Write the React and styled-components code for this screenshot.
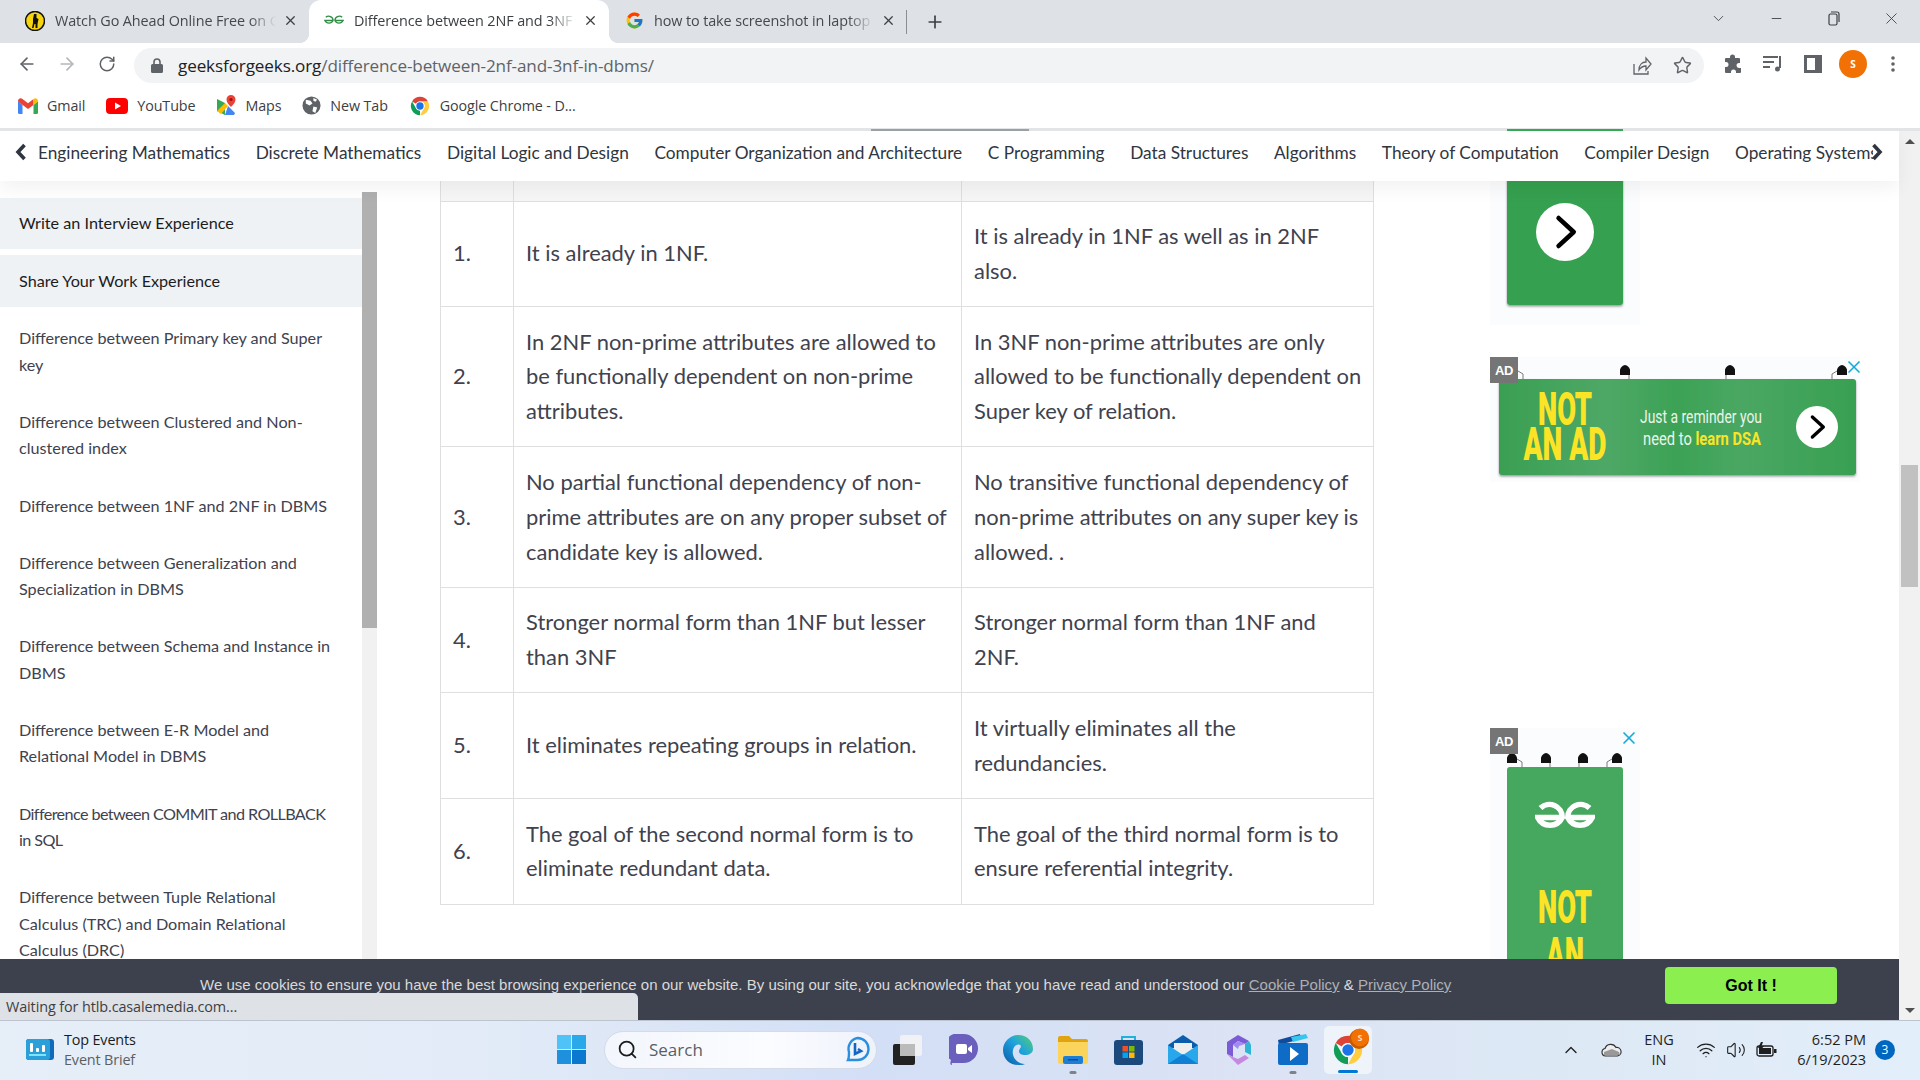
import React from 'react';
import styled, { createGlobalStyle } from 'styled-components';
import { FcGoogle } from 'react-icons/fc';
import { ArrowLeft, ArrowRight, RotateCw, Star, X, Plus, ChevronDown, Minus, Wifi, Volume2, ChevronUp, Search as SearchGlyph } from 'lucide-react';

const SITE = '"Lato", "Noto Sans", sans-serif';
const UI = '"Open Sans", "Noto Sans", sans-serif';

const Global = createGlobalStyle`
  html, body { margin: 0; padding: 0; background: #fff; }
  * { box-sizing: border-box; }
  body { font-family: ${SITE}; overflow: hidden; }
`;

const Screen = styled.div`width:1920px;height:1080px;display:flex;flex-direction:column;overflow:hidden;background:#fff;`;

/* ---------- browser chrome ---------- */
const TabStrip = styled.div`height:43px;flex:none;background:#dee1e6;display:flex;align-items:stretch;`;
const Tab = styled.div`
  width:${p=>p.$w}px;padding:0 0 2px ${p=>p.$pad}px;display:flex;align-items:center;position:relative;
  font:14.4px ${UI};letter-spacing:-.1px;color:#45494e;flex:none;
  ${p=>p.$active?`background:#fff;border-radius:12px 12px 0 0;color:#3c4043;
    &::before,&::after{content:"";position:absolute;bottom:0;width:10px;height:10px;}
    &::before{left:-10px;background:radial-gradient(circle at 0 0,transparent 10px,#fff 10.5px);}
    &::after{right:-10px;background:radial-gradient(circle at 100% 0,transparent 10px,#fff 10.5px);}`:''}
`;
const Fav = styled.span`width:20px;height:20px;flex:none;margin-right:10px;display:flex;align-items:center;justify-content:center;`;
const TabLabel = styled.span`flex:1;min-width:0;white-space:nowrap;overflow:hidden;-webkit-mask-image:linear-gradient(90deg,#000 88%,transparent);mask-image:linear-gradient(90deg,#000 88%,transparent);`;
const TabClose = styled.span`width:16px;height:16px;margin:0 11px 0 6px;display:flex;align-items:center;justify-content:center;color:#3c4043;flex:none;`;
const TabDivider = styled.span`width:1px;height:24px;background:#8a8d91;align-self:center;margin-left:-1px;`;
const NewTab = styled.span`width:56px;display:flex;align-items:center;justify-content:center;color:#3c4043;`;
const WindowControls = styled.div`margin-left:auto;display:flex;padding-bottom:6px;`;
const WinBtn = styled.span`width:57.5px;display:flex;align-items:center;justify-content:center;color:#3c4043;`;

const Toolbar = styled.div`height:42px;flex:none;background:#fff;display:flex;align-items:center;padding:0 8px 0 7px;`;
const ToolBtn = styled.span`width:${p=>p.$w||40}px;height:36px;flex:none;display:flex;align-items:center;justify-content:center;color:${p=>p.$dim?'#b4b7bb':'#5f6368'};`;
const Omnibox = styled.div`flex:1;height:35px;margin:3px 9px 0 7px;background:#f1f3f4;border-radius:18px;display:flex;align-items:center;padding:0 2px 0 17px;`;
const Url = styled.div`flex:1;font:17.1px ${UI};letter-spacing:-.12px;color:#5f6368;margin-left:15px;padding-bottom:1px;white-space:nowrap;b{font-weight:400;color:#202124;}`;
const Avatar = styled.span`width:28px;height:28px;border-radius:50%;background:#f17105;color:#fff;font:700 10px ${UI};display:flex;align-items:center;justify-content:center;`;

const Bookmarks = styled.div`height:43px;flex:none;background:#fff;display:flex;align-items:center;gap:21px;padding:0 0 2px 18px;`;
const Bookmark = styled.span`display:flex;align-items:center;gap:9px;font:14.3px ${UI};letter-spacing:-.1px;color:#3c4043;white-space:nowrap;`;

const PeekStrip = styled.div`height:3px;flex:none;background:#e3e4e6;display:flex;padding-top:1px;`;
const PeekBar = styled.span`height:2px;width:${p=>p.$w}px;margin-left:${p=>p.$ml}px;background:${p=>p.$c};`;

/* ---------- page ---------- */
const PageArea = styled.div`flex:1;min-height:0;display:flex;position:relative;overflow:hidden;`;
const Viewport = styled.div`flex:1;min-width:0;display:flex;flex-direction:column;position:relative;`;
const TopNav = styled.nav`height:50px;flex:none;background:#fff;display:flex;align-items:center;padding-bottom:8px;position:relative;z-index:2;box-shadow:0 8px 18px rgba(0,0,0,.05);`;
const NavBack = styled.span`flex:none;width:38px;padding-left:4px;display:flex;justify-content:center;color:#2f3640;`;
const NavForward = styled.span`flex:none;width:26px;display:flex;color:#2f3640;transform:translateX(-2px);`;
const NavList = styled.div`flex:1;min-width:0;overflow:hidden;display:flex;gap:25.6px;white-space:nowrap;font:17.28px ${SITE};color:#2f3640;height:28px;align-items:center;`;

const Body = styled.div`flex:1;min-height:0;display:flex;overflow:hidden;`;
const Sidebar = styled.aside`width:377px;flex:none;display:flex;margin-top:11px;`;
const SideList = styled.div`width:362px;flex:none;padding-top:6px;font:16.2px/26.4px ${SITE};color:#40424e;`;
const SideFeature = styled.div`height:${p=>p.$h}px;background:#eff2f5;color:#1c1c1c;padding-left:19px;display:flex;align-items:center;margin-bottom:6px;`;
const SideItem = styled.div`padding:15.4px 0 15.4px 19px;white-space:pre;letter-spacing:${p=>p.$tight?'-.6px':'0'};`;
const SideItems = styled.div`margin-top:-3px;`;
const SideTrack = styled.div`width:15px;flex:none;background:#f1f1f1;`;
const SideThumb = styled.div`height:436px;background:#b0b0b0;`;

const MainCol = styled.main`width:933px;flex:none;margin-left:63px;`;
const DataTable = styled.table`width:933px;border-collapse:collapse;table-layout:fixed;font:21.9px/34.8px ${SITE};color:#40424e;`;
const HeadCell = styled.td`height:20px;padding:0;background:#f6f6f6;border:1px solid #dfdfdf;border-top:0;`;
const Cell = styled.td`padding:17.5px 9px 17.5px 12px;border:1px solid #dfdfdf;vertical-align:middle;`;

const AdCol = styled.div`width:370px;flex:none;margin-left:117px;display:flex;flex-direction:column;`;
const AdFrame = styled.div`position:relative;width:${p=>p.$w}px;height:${p=>p.$h}px;margin-top:${p=>p.$mt||0}px;background:#fbfcfe;flex:none;svg{display:block;}`;
const AdBadge = styled.span`position:absolute;left:0;top:0;width:28px;height:26px;background:#757575;color:#fff;font:700 13px "Liberation Sans",sans-serif;letter-spacing:-.5px;display:flex;align-items:center;justify-content:center;z-index:1;`;
const AdClose = styled.span`position:absolute;top:0;right:${p=>p.$r}px;color:#12acd6;display:flex;z-index:1;`;

const PageScroll = styled.div`width:21px;flex:none;background:#f1f1f1;display:flex;flex-direction:column;align-items:center;position:relative;`;
const ScrollThumb = styled.div`width:17px;height:122px;background:#c1c1c1;margin-top:321px;`;
const ScrollArrow = styled.span`width:0;height:0;border-left:5px solid transparent;border-right:5px solid transparent;${p=>p.$up?'border-bottom:5px solid #505050;margin-top:8px;':'border-top:5px solid #505050;position:absolute;bottom:7px;'}`;

const CookieBar = styled.div`position:absolute;left:0;right:0;bottom:0;height:61px;background:#3d414d;z-index:3;display:flex;align-items:flex-start;padding:8px 0 0 200px;`;
const CookieText = styled.div`width:1465px;height:35px;display:flex;align-items:center;font:15px "Liberation Sans",Arial,sans-serif;color:#d9d9d9;white-space:pre;a{color:#aeb0b5;text-decoration:underline;}`;
const GotIt = styled.button`width:172px;height:37px;border:0;border-radius:4px;background:#8bef4f;color:#000;font:700 16px "Liberation Sans",Arial,sans-serif;`;
const StatusBubble = styled.div`position:absolute;left:0;bottom:0;width:638px;height:27px;background:#dee1e6;border-top-right-radius:5px;z-index:4;font:14.4px ${UI};letter-spacing:-.1px;color:#3c4043;padding-left:6px;display:flex;align-items:center;`;

/* ---------- taskbar ---------- */
const Taskbar = styled.footer`height:60px;flex:none;display:flex;align-items:center;position:relative;border-top:1px solid #bcc4d0;padding-bottom:2px;
  background:linear-gradient(90deg,#e6eef8 0%,#e2ebf7 25%,#d3dff6 45%,#dbe3f4 65%,#dde8f5 80%,#e2eef9 100%);`;
const Widget = styled.div`flex:none;width:557px;padding-left:26px;display:flex;align-items:center;gap:10px;`;
const WidgetText = styled.div`font:14.4px/20px ${UI};letter-spacing:-.15px;color:#1b1b1b;span{display:block;color:#5a5f66;}`;
const StartBtn = styled.span`flex:none;width:29px;height:29px;margin-right:18px;display:flex;`;
const SearchBox = styled.div`flex:none;width:273px;height:38px;border-radius:19px;background:linear-gradient(90deg,#f3f6fc,#fbfcff 60%,#eef2fb);border:1px solid #d5dbe7;display:flex;align-items:center;padding:0 6px 0 12px;font:17px ${UI};color:#5a5f66;gap:11px;margin-right:3.5px;`;
const SearchLabel = styled.span`flex:1;`;
const Slot = styled.span`flex:none;width:55px;height:48px;display:flex;align-items:center;justify-content:center;position:relative;
  ${p=>p.$open?`&::after{content:"";position:absolute;bottom:${p.$active?'1px':'0'};left:50%;transform:translateX(-50%);height:3px;border-radius:2px;width:${p.$active?'20px':'7px'};background:${p.$active?'#0078d4':'#7e8288'};}`:''}
  ${p=>p.$active?'background:rgba(255,255,255,.55);border-radius:5px;':''}
`;
const ActiveSlot = styled.div`flex:none;width:55px;display:flex;justify-content:center;`;
const ActiveInner = styled(Slot)`width:48px;`;
const TrayBadgeDot = styled.span`position:absolute;right:3px;top:2px;display:flex;`;
const Tray = styled.div`margin-left:auto;display:flex;align-items:center;padding-right:25px;color:#1f1f1f;`;
const TraySlot = styled.span`width:${p=>p.$w}px;display:flex;justify-content:center;align-items:center;flex:none;`;
const Lang = styled.span`width:56px;text-align:center;font:14.5px/20px ${UI};color:#1f1f1f;`;
const Clock = styled.span`width:85px;text-align:right;font:14.5px/20px ${UI};color:#1f1f1f;white-space:nowrap;`;
const Badge = styled.span`width:20px;height:20px;border-radius:50%;margin-left:9px;background:#0067c0;color:#fff;font:12px ${UI};display:flex;align-items:center;justify-content:center;`;

/* ---------- icons ---------- */
const GfgLogo = ({ size = 20, color = '#2f8d46', sw = 1.5 }) => (
  <svg width={size} height={size * .55} viewBox="0 0 44 24" fill="none" stroke={color} strokeWidth={sw * 2}>
    <path d="M4 5A9.500 9.500 0 0 1 20 12A10 10 0 0 1 2 12H20" /><path d="M40 5A9.500 9.500 0 0 0 24 12A10 10 0 0 0 42 12H24" />
  </svg>
);
const ChromeIcon = ({ size = 22 }) => (
  <svg width={size} height={size} viewBox="0 0 24 24">
    <path fill="#db4437" d="M12 2A10 10 0 0 1 20.66 7H12A5 5 0 0 0 7.67 9.500L3.34 7A10 10 0 0 1 12 2z" />
    <path fill="#0f9d58" d="M3.34 7L7.67 14.500A5 5 0 0 0 12 17L12 22A10 10 0 0 1 3.34 7z" />
    <path fill="#ffcd40" d="M20.66 7H12A5 5 0 0 1 16.33 14.500L12 22A10 10 0 0 0 20.66 7z" />
    <circle cx="12" cy="12" r="5" fill="#fff" /><circle cx="12" cy="12" r="4" fill="#1a73e8" />
  </svg>
);
const Gmail = () => (
  <svg width="20" height="16" viewBox="0 0 20 16">
    <path fill="#4285f4" d="M0 3v11.500A1.500 1.500 0 0 0 1.500 16H4.500V7z" /><path fill="#34a853" d="M20 3v11.500A1.500 1.500 0 0 1 18.500 16H15.500V7z" />
    <path fill="#ea4335" d="M0 3.500C0 .8 2.600-.500 4.500 1L10 5.200 15.500 1V7L10 11 0 3.500z" /><path fill="#fbbc04" d="M15.500 1C17.400-.500 20 .8 20 3.500L15.500 7z" />
  </svg>
);
const YouTube = () => (
  <svg width="22" height="16" viewBox="0 0 22 16"><rect width="22" height="16" rx="4" fill="#f00" /><path fill="#fff" d="M9 4.500l6 3.500-6 3.500z" /></svg>
);
const Maps = () => (
  <svg width="20" height="22" viewBox="0 0 20 22">
    <path fill="#34a853" d="M1 4l8 4v12L1 16z" /><path fill="#fbbc04" d="M1 16l8-8 3 3-7 8z" /><path fill="#4285f4" d="M9 20l3-9 7 7-1 2z" /><path fill="#ea4335" d="M15 0a4.500 4.500 0 0 0-4.500 4.500C10.500 8 15 12 15 12s4.500-4 4.500-7.500A4.500 4.500 0 0 0 15 0z" /><circle cx="15" cy="4.500" r="1.600" fill="#a50e0e" />
  </svg>
);
const Globe = () => (
  <svg width="19" height="19" viewBox="0 0 20 20"><circle cx="10" cy="10" r="9.500" fill="#5f6368" /><path fill="#fff" d="M4 4l5 1 2 3-3 2-4-2zM12 11l4 1-2 6-3-2zM12 2l4 2-2 2-2-1z" /></svg>
);
const Lock = () => (
  <svg width="12" height="15" viewBox="0 0 12 15"><path fill="#5f6368" d="M1.500 6h9A1.500 1.500 0 0 1 12 7.500v6A1.500 1.500 0 0 1 10.500 15h-9A1.500 1.500 0 0 1 0 13.500v-6A1.500 1.500 0 0 1 1.500 6z" /><path fill="none" stroke="#5f6368" strokeWidth="1.600" d="M3 6.500V4a3 3 0 0 1 6 0v2.500" /></svg>
);
const Share = () => (
  <svg width="20" height="20" viewBox="0 0 20 20" fill="none" stroke="#5f6368" strokeWidth="1.300"><path d="M2 8v10h14v-3" /><path d="M7 14c0-5 3-8 7-8V2l5 6-5 6v-4c-3 0-5 1-7 4z" /></svg>
);
const Puzzle = () => (
  <svg width="18" height="20" viewBox="0 0 18 20"><path fill="#5f6368" d="M6 3a2.500 2.500 0 0 1 5 0v1h4a1 1 0 0 1 1 1v4h-1a2.500 2.500 0 0 0 0 5h2v4a1 1 0 0 1-1 1h-4v-1a2.500 2.500 0 0 0-5 0v1H2a1 1 0 0 1-1-1v-5h1a2.500 2.500 0 0 0 0-5H1V5a1 1 0 0 1 1-1h4z" /></svg>
);
const MediaQ = () => (
  <svg width="20" height="18" viewBox="0 0 20 18" fill="none" stroke="#5f6368" strokeWidth="2"><path d="M0 2h15M0 7h11M0 12h7" /><path d="M17 1v12" /><circle cx="14.500" cy="14" r="2.500" fill="#5f6368" stroke="none" /></svg>
);
const SidePanel = () => (
  <svg width="18" height="18" viewBox="0 0 18 18"><path fill="#5f6368" fillRule="evenodd" d="M0 0h18v18H0zM3 3v12h8V3z" /></svg>
);
const Dots = () => (
  <svg width="4" height="16" viewBox="0 0 4 16" fill="#5f6368"><circle cx="2" cy="2" r="1.800" /><circle cx="2" cy="8" r="1.800" /><circle cx="2" cy="14" r="1.800" /></svg>
);
const Restore = () => (
  <svg width="12" height="15" viewBox="0 0 12 15" fill="none" stroke="#3c4043" strokeWidth="1.200"><rect x="1" y="3" width="8" height="11" rx="1.500" /><path d="M3 1h6a2 2 0 0 1 2 2v8" /></svg>
);
const GoAhead = () => (
  <svg width="20" height="20" viewBox="0 0 20 20"><circle cx="10" cy="10" r="9.500" fill="#f6d40e" stroke="#111" strokeWidth="1.500" /><path fill="#111" d="M9 3h2.500v4l2 1-1 5v4h-2v-4h-1l-1 4H7l1-5V8z" /></svg>
);
const NavChevron = ({ right }) => (
  <svg width="12" height="18" viewBox="0 0 12 18" fill="none" stroke="currentColor" strokeWidth="3.600" strokeLinejoin="miter">
    <path d={right ? 'M2.500 2l6.500 7-6.500 7' : 'M9.500 2L3 9l6.500 7'} />
  </svg>
);

/* A hanging lamp over an ad: x is the lamp, stem is where its wire meets the board, top is the board's y. */
const Lamp = ({ x, stem, top }) => (
  <g>
    <path fill="none" stroke="#7a7a7a" strokeWidth="1" d={`M${stem} ${top}v-5L${x} ${top - 11}`} />
    <path fill="#111" d={`M${x - 5} ${top - 4}v-5c0-2 3-5 5-5s5 3 5 5v5z`} />
  </g>
);
const GoCircle = ({ cx, cy, r }) => (
  <g><circle cx={cx} cy={cy} r={r} fill="#fff" /><path fill="none" stroke="#000" strokeWidth={r * .16} strokeLinecap="round" strokeLinejoin="round" d={`M${cx - r * .22} ${cy - r * .48}L${cx + r * .3} ${cy}L${cx - r * .22} ${cy + r * .48}`} /></g>
);
const Condensed = ({ x, y, w, size, fill = '#fbe426', weight = 900, anchor = 'middle', children }) => (
  <text x={x} y={y} fontFamily='"Roboto","Liberation Sans",sans-serif' fontWeight={weight} fontSize={size} fill={fill} textAnchor={anchor} textLength={w} lengthAdjust="spacingAndGlyphs">{children}</text>
);
const AdDefs = () => (
  <defs>
    <linearGradient id="adg" x1="0" x2="1" y1="0" y2="0">
      <stop offset="0" stopColor="#3a9f52" /><stop offset=".3" stopColor="#4ea866" /><stop offset=".5" stopColor="#3ca255" /><stop offset=".68" stopColor="#4aa763" /><stop offset="1" stopColor="#38a052" />
    </linearGradient>
    <filter id="ads" x="-5%" y="-5%" width="110%" height="110%"><feDropShadow dx="0" dy="1.500" stdDeviation="1.200" floodOpacity=".4" /></filter>
  </defs>
);

const navLinks = ['Engineering Mathematics', 'Discrete Mathematics', 'Digital Logic and Design', 'Computer Organization and Architecture', 'C Programming', 'Data Structures', 'Algorithms', 'Theory of Computation', 'Compiler Design', 'Operating Systems'];
const sideLinks = [
  'Difference between Primary key and Super\nkey',
  'Difference between Clustered and Non-\nclustered index',
  'Difference between 1NF and 2NF in DBMS',
  'Difference between Generalization and\nSpecialization in DBMS',
  'Difference between Schema and Instance in\nDBMS',
  'Difference between E-R Model and\nRelational Model in DBMS',
  'Difference between COMMIT and ROLLBACK\nin SQL',
  'Difference between Tuple Relational\nCalculus (TRC) and Domain Relational\nCalculus (DRC)',
];
const rows = [
  ['1.', 'It is already in 1NF.', 'It is already in 1NF as well as in 2NF also.'],
  ['2.', 'In 2NF non-prime attributes are allowed to be functionally dependent on non-prime attributes.', 'In 3NF non-prime attributes are only allowed to be functionally dependent on Super key of relation.'],
  ['3.', 'No partial functional dependency of non-prime attributes are on any proper subset of candidate key is allowed.', 'No transitive functional dependency of non-prime attributes on any super key is allowed. .'],
  ['4.', 'Stronger normal form than 1NF but lesser than 3NF', 'Stronger normal form than 1NF and 2NF.'],
  ['5.', 'It eliminates repeating groups in relation.', 'It virtually eliminates all the redundancies.'],
  ['6.', 'The goal of the second normal form is to eliminate redundant data.', 'The goal of the third normal form is to ensure referential integrity.'],
];

const TI = {
  taskview: (<svg width="30" height="30" viewBox="0 0 30 30"><rect x="0" y="9" width="22" height="21" rx="2" fill="#222" /><rect x="7" y="0" width="22" height="21" rx="2" fill="#f5f5f5" fillOpacity=".85" /><rect x="7" y="9" width="15" height="12" fill="#bbb" /></svg>),
  chat: (<svg width="29" height="31" viewBox="0 0 29 31"><path fill="#6a5fbd" d="M14.500 0a14.500 14.500 0 0 1 0 29H3a2 2 0 0 0 0 2c-2 0-2-2-1-5A14.500 14.500 0 0 1 14.500 0z" /><rect x="7" y="10" width="11" height="10" rx="2" fill="#fff" /><path fill="#fff" d="M19 14l4-3v8l-4-3z" /></svg>),
  edge: (<svg width="30" height="30" viewBox="0 0 30 30"><defs><linearGradient id="eg" x1="0" x2="1" y1="1" y2="0"><stop offset="0" stopColor="#0c59a4" /><stop offset=".55" stopColor="#1ea2df" /><stop offset="1" stopColor="#54d073" /></linearGradient></defs><path fill="url(#eg)" d="M15 0c9 0 15 6 15 14 0 4-4 6-8 6-3 0-6-1-6-4 0-2 2-3 2-5-1-2-4-2-6 0-3 3-3 9 0 13 2 3 6 5 10 5-1 1-4 1-7 1C7 30 0 24 0 15 0 7 7 0 15 0z" /></svg>),
  folder: (<svg width="30" height="28" viewBox="0 0 30 28"><path fill="#e0a410" d="M0 2a2 2 0 0 1 2-2h9l3 3h14a2 2 0 0 1 2 2v3H0z" /><path fill="#fbd45b" d="M0 6h30v20a2 2 0 0 1-2 2H2a2 2 0 0 1-2-2z" /><rect x="5" y="20" width="20" height="8" rx="2" fill="#1c7ed6" /><rect x="10" y="23" width="10" height="1.500" fill="#0b4f99" /></svg>),
  store: (<svg width="29" height="30" viewBox="0 0 29 30"><path fill="none" stroke="#20b2d8" strokeWidth="2" d="M8 7V2h13v5" /><rect y="5" width="29" height="25" rx="3" fill="#1c4a7d" /><rect x="8.500" y="11" width="5.500" height="5.500" fill="#f25022" /><rect x="15" y="11" width="5.500" height="5.500" fill="#7fba00" /><rect x="8.500" y="17.500" width="5.500" height="5.500" fill="#00a4ef" /><rect x="15" y="17.500" width="5.500" height="5.500" fill="#ffb900" /></svg>),
  mail: (<svg width="30" height="29" viewBox="0 0 30 29"><path fill="#0b5cad" d="M0 10L15 0l15 10v3H0z" /><path fill="#eee" d="M6 8h18v8l-9 6-9-6z" /><path fill="#28a8ea" d="M0 10l15 10 15-10v19H0z" /><path fill="#0f80d6" d="M0 29l15-10 15 10z" /></svg>),
  m365: (<svg width="26" height="30" viewBox="0 0 26 30"><path fill="#7b5bd6" d="M13 0l11 6-4 3-7-3-5 4v12l-6-3V7z" /><path fill="#2fb4d6" d="M24 6l2 4v10l-6-3V9z" /><path fill="#c58ae0" d="M2 19l6 3 5 2 7-4 4 3-11 7z" /><path fill="#a48af0" d="M8 10l5-4 7 3-6 2-1 3z" /></svg>),
  clip: (<svg width="30" height="31" viewBox="0 0 30 31"><path fill="#0f4c9c" d="M0 6l22-6 1 5L1 11z" /><path fill="#37c6ee" d="M13 3l15-3 2 4-15 4z" /><rect y="9" width="30" height="22" rx="2" fill="#0e6cc7" /><path fill="#fff" d="M12 13l9 7-9 7z" /></svg>),
};

export default function App() {
  return (
    <Screen>
      <Global />
      <TabStrip>
        <Tab $w={309} $pad={25}><Fav><GoAhead /></Fav><TabLabel>Watch Go Ahead Online Free on Gomovies</TabLabel><TabClose><X size={15} strokeWidth={2} /></TabClose></Tab>
        <Tab $w={300} $pad={15} $active><Fav><GfgLogo size={20} /></Fav><TabLabel>Difference between 2NF and 3NF in DBMS</TabLabel><TabClose><X size={15} strokeWidth={2} /></TabClose></Tab>
        <Tab $w={298} $pad={15}><Fav><FcGoogle size={19} /></Fav><TabLabel>how to take screenshot in laptop - Google</TabLabel><TabClose><X size={15} strokeWidth={2} /></TabClose></Tab>
        <TabDivider />
        <NewTab><Plus size={20} strokeWidth={2} /></NewTab>
        <WindowControls>
          <WinBtn><ChevronDown size={17} strokeWidth={1.2} /></WinBtn>
          <WinBtn><Minus size={15} strokeWidth={1.4} /></WinBtn>
          <WinBtn><Restore /></WinBtn>
          <WinBtn><X size={19} strokeWidth={1.1} /></WinBtn>
        </WindowControls>
      </TabStrip>
      <Toolbar>
        <ToolBtn><ArrowLeft size={20} strokeWidth={2} /></ToolBtn>
        <ToolBtn $dim><ArrowRight size={20} strokeWidth={2} /></ToolBtn>
        <ToolBtn><RotateCw size={18} strokeWidth={2} /></ToolBtn>
        <Omnibox>
          <Lock />
          <Url><b>geeksforgeeks.org</b>/difference-between-2nf-and-3nf-in-dbms/</Url>
          <ToolBtn><Share /></ToolBtn>
          <ToolBtn><Star size={19} strokeWidth={1.8} /></ToolBtn>
        </Omnibox>
        <ToolBtn><Puzzle /></ToolBtn>
        <ToolBtn><MediaQ /></ToolBtn>
        <ToolBtn><SidePanel /></ToolBtn>
        <ToolBtn><Avatar>S</Avatar></ToolBtn>
        <ToolBtn $w={39}><Dots /></ToolBtn>
      </Toolbar>
      <Bookmarks>
        <Bookmark><Gmail />Gmail</Bookmark>
        <Bookmark><YouTube />YouTube</Bookmark>
        <Bookmark><Maps />Maps</Bookmark>
        <Bookmark><Globe />New Tab</Bookmark>
        <Bookmark><ChromeIcon />Google Chrome - D...</Bookmark>
      </Bookmarks>
      <PeekStrip><PeekBar $ml={871} $w={158} $c="#9aa0a6" /><PeekBar $ml={478} $w={116} $c="#34a853" /></PeekStrip>
      <PageArea>
        <Viewport>
          <TopNav>
            <NavBack><NavChevron /></NavBack>
            <NavList>{navLinks.map(n => <span key={n}>{n}</span>)}</NavList>
            <NavForward><NavChevron right /></NavForward>
          </TopNav>
          <Body>
            <Sidebar>
              <SideList>
                <SideFeature $h={51}>Write an Interview Experience</SideFeature>
                <SideFeature $h={52}>Share Your Work Experience</SideFeature>
                <SideItems>{sideLinks.map(s => <SideItem key={s} $tight={s.includes('ROLLBACK')}>{s}</SideItem>)}</SideItems>
              </SideList>
              <SideTrack><SideThumb /></SideTrack>
            </Sidebar>
            <MainCol>
              <DataTable>
                <colgroup><col width="73" /><col width="448" /><col width="412" /></colgroup>
                <tbody>
                  <tr><HeadCell /><HeadCell /><HeadCell /></tr>
                  {rows.map(r => <tr key={r[0]}>{r.map((c, i) => <Cell key={i}>{c}</Cell>)}</tr>)}
                </tbody>
              </DataTable>
            </MainCol>
            <AdCol>
              <AdFrame $w={150} $h={144}>
                <svg width="150" height="144"><AdDefs /><rect x="17" y="-10" width="116" height="134" rx="3" fill="#36a050" filter="url(#ads)" /><GoCircle cx={75} cy={51} r={29} /></svg>
              </AdFrame>
              <AdFrame $w={370} $h={125} $mt={32}>
                <AdBadge>AD</AdBadge>
                <AdClose $r={-4}><X size={20} strokeWidth={2} /></AdClose>
                <svg width="370" height="125">
                  <Lamp x={23} stem={33} top={22} /><Lamp x={135} stem={139} top={22} /><Lamp x={240} stem={236} top={22} /><Lamp x={352} stem={342} top={22} />
                  <rect x="9" y="22" width="357" height="96" rx="3" fill="url(#adg)" filter="url(#ads)" />
                  <Condensed x={75} y={68} w={54} size={46}>NOT</Condensed>
                  <Condensed x={75} y={103} w={83} size={46}>AN AD</Condensed>
                  <Condensed x={211} y={66} w={122} size={19} fill="#eaf5ec" weight={400}>Just a reminder you</Condensed>
                  <text x="153" y="88" fontFamily='"Roboto",sans-serif' fontSize="19" fill="#eaf5ec" textLength="118" lengthAdjust="spacingAndGlyphs">need to <tspan fill="#fbe426" fontWeight="700">learn DSA</tspan></text>
                  <GoCircle cx={327} cy={70} r={21} />
                </svg>
              </AdFrame>
              <AdFrame $w={150} $h={240} $mt={246}>
                <AdBadge>AD</AdBadge>
                <AdClose $r={1}><X size={20} strokeWidth={2} /></AdClose>
                <svg width="150" height="240">
                  <Lamp x={22} stem={32} top={39} /><Lamp x={56} stem={60} top={39} /><Lamp x={93} stem={89} top={39} /><Lamp x={127} stem={117} top={39} />
                  <rect x="17" y="39" width="116" height="210" rx="3" fill="#46a75f" />
                  <g transform="translate(45 73)"><GfgLogo size={60} color="#fff" sw={2} /></g>
                  <Condensed x={75} y={195} w={54} size={46}>NOT</Condensed>
                  <Condensed x={75} y={242} w={38} size={46}>AN</Condensed>
                </svg>
              </AdFrame>
            </AdCol>
          </Body>
          <CookieBar>
            <CookieText><span>We use cookies to ensure you have the best browsing experience on our website. By using our site, you acknowledge that you have read and understood our <a>Cookie Policy</a> &amp; <a>Privacy Policy</a></span></CookieText>
            <GotIt>Got It !</GotIt>
          </CookieBar>
          <StatusBubble>Waiting for htlb.casalemedia.com...</StatusBubble>
        </Viewport>
        <PageScroll>
          <ScrollArrow $up />
          <ScrollThumb />
          <ScrollArrow />
        </PageScroll>
      </PageArea>
      <Taskbar>
        <Widget>
          <svg width="28" height="21" viewBox="0 0 28 21"><rect width="28" height="21" rx="3" fill="#0f6cbd" /><rect width="24" height="21" rx="3" fill="#2a9fd8" /><rect x="4" y="4" width="3" height="9" rx="1" fill="#fff" /><rect x="10" y="9" width="3" height="4" rx="1" fill="#fff" /><rect x="16" y="6" width="3" height="7" rx="1" fill="#fff" /><rect x="3" y="15" width="17" height="2" fill="#7fe4ff" /></svg>
          <WidgetText>Top Events<span>Event Brief</span></WidgetText>
        </Widget>
        <StartBtn>
          <svg width="29" height="29" viewBox="0 0 29 29"><rect width="14" height="14" fill="#4fc3f7" /><rect x="15" width="14" height="14" fill="#29a9ea" /><rect y="15" width="14" height="14" fill="#1e90dd" /><rect x="15" y="15" width="14" height="14" fill="#0a78cf" /></svg>
        </StartBtn>
        <SearchBox>
          <SearchGlyph size={21} strokeWidth={2} color="#1b1b1b" />
          <SearchLabel>Search</SearchLabel>
          <svg width="25" height="28" viewBox="0 0 25 28" fill="none"><path stroke="#2b8fe0" strokeWidth="2.400" d="M12.500 2a11 11 0 0 1 0 22H3c1-2 1-5 1-8A11 11 0 0 1 12.500 2z" /><path stroke="#1366c6" strokeWidth="2.600" d="M10 7v11l6-3-3-2" /></svg>
        </SearchBox>
        <Slot>{TI.taskview}</Slot>
        <Slot>{TI.chat}</Slot>
        <Slot>{TI.edge}</Slot>
        <Slot $open>{TI.folder}</Slot>
        <Slot>{TI.store}</Slot>
        <Slot>{TI.mail}</Slot>
        <Slot>{TI.m365}</Slot>
        <Slot $open>{TI.clip}</Slot>
        <ActiveSlot>
          <ActiveInner $open $active>
            <ChromeIcon size={34} />
            <TrayBadgeDot><svg width="20" height="22" viewBox="0 0 20 22"><circle cx="10" cy="11" r="10" fill="#c85a00" /><circle cx="11" cy="9.500" r="9" fill="#f17105" /><text x="11" y="13" textAnchor="middle" fontSize="9" fontWeight="700" fill="#ffd9b5" fontFamily="Open Sans">S</text></svg></TrayBadgeDot>
          </ActiveInner>
        </ActiveSlot>
        <Tray>
          <TraySlot $w={40}><ChevronUp size={20} strokeWidth={1.6} /></TraySlot>
          <TraySlot $w={40}><svg width="21" height="14" viewBox="0 0 21 14"><path fill="#eee" stroke="#333" strokeWidth="1.200" d="M4.500 13a3.800 3.800 0 0 1-.5-7.500A6 6 0 0 1 15 4.500a4.300 4.300 0 0 1 1.500 8.500z" /><path fill="#999" d="M3 9l8-3 7 3 1 3H3z" /></svg></TraySlot>
          <Lang>ENG<br />IN</Lang>
          <TraySlot $w={4} />
          <TraySlot $w={30}><Wifi size={20} strokeWidth={1.5} /></TraySlot>
          <TraySlot $w={30}><Volume2 size={20} strokeWidth={1.3} /></TraySlot>
          <TraySlot $w={30}><svg width="21" height="16" viewBox="0 0 21 16"><rect x="1" y="4" width="16" height="10" rx="2" fill="none" stroke="#1f1f1f" strokeWidth="1.300" /><rect x="3" y="6" width="12" height="6" fill="#1f1f1f" /><rect x="18" y="7" width="2.500" height="4" fill="#1f1f1f" /><path fill="#1f1f1f" d="M5 0L2 6h2.500L4 9l4-5H5.500L7 0z" /></svg></TraySlot>
          <Clock>6:52 PM<br />6/19/2023</Clock>
          <Badge>3</Badge>
        </Tray>
      </Taskbar>
    </Screen>
  );
}
